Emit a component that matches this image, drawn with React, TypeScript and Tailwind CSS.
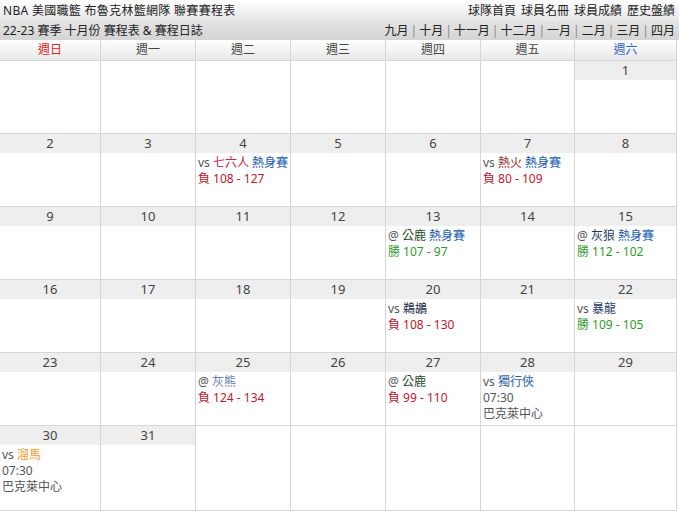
import React from "react";

type Line = { parts: { t: string; c: string }[] };
type Day = { d?: number; lines?: Line[] };

const GRAY = "text-[#555]";
const FONT = { fontFamily: '"Segoe UI", "Noto Sans", "Noto Sans CJK TC", sans-serif' };

const vs = (t: string) => ({ t, c: GRAY });
const warm = { t: " 熱身賽", c: "text-[#1a5cb0]" };
const lose = (s: string) => ({ parts: [{ t: "負 " + s, c: "text-[#c0182c]" }] });
const win = (s: string) => ({ parts: [{ t: "勝 " + s, c: "text-[#2e9a2e]" }] });
const plain = (t: string) => ({ parts: [{ t, c: GRAY }] });

const WEEKS: Day[][] = [
  [{}, {}, {}, {}, {}, {}, { d: 1 }],
  [
    { d: 2 }, { d: 3 },
    { d: 4, lines: [{ parts: [vs("vs "), { t: "七六人", c: "text-[#c4284e]" }, warm] }, lose("108 - 127")] },
    { d: 5 }, { d: 6 },
    { d: 7, lines: [{ parts: [vs("vs "), { t: "熱火", c: "text-[#a5332c]" }, warm] }, lose("80 - 109")] },
    { d: 8 },
  ],
  [
    { d: 9 }, { d: 10 }, { d: 11 }, { d: 12 },
    { d: 13, lines: [{ parts: [vs("@ "), { t: "公鹿", c: "text-[#1f4a2a]" }, warm] }, win("107 - 97")] },
    { d: 14 },
    { d: 15, lines: [{ parts: [vs("@ "), { t: "灰狼", c: "text-[#233a5a]" }, warm] }, win("112 - 102")] },
  ],
  [
    { d: 16 }, { d: 17 }, { d: 18 }, { d: 19 },
    { d: 20, lines: [{ parts: [vs("vs "), { t: "鵜鶘", c: "text-[#1c2a44]" }] }, lose("108 - 130")] },
    { d: 21 },
    { d: 22, lines: [{ parts: [vs("vs "), { t: "暴龍", c: "text-[#283a66]" }] }, win("109 - 105")] },
  ],
  [
    { d: 23 }, { d: 24 },
    { d: 25, lines: [{ parts: [vs("@ "), { t: "灰熊", c: "text-[#6a80aa]" }] }, lose("124 - 134")] },
    { d: 26 },
    { d: 27, lines: [{ parts: [vs("@ "), { t: "公鹿", c: "text-[#1f4a2a]" }] }, lose("99 - 110")] },
    { d: 28, lines: [{ parts: [vs("vs "), { t: "獨行俠", c: "text-[#2f63a8]" }] }, plain("07:30"), plain("巴克萊中心")] },
    { d: 29 },
  ],
  [
    { d: 30, lines: [{ parts: [vs("vs "), { t: "溜馬", c: "text-[#f0a030]" }] }, plain("07:30"), plain("巴克萊中心")] },
    { d: 31 }, {}, {}, {}, {}, {},
  ],
];

const HEAD = ["週日", "週一", "週二", "週三", "週四", "週五", "週六"];
const MONTHS = ["九月", "十月", "十一月", "十二月", "一月", "二月", "三月", "四月"];

function Cell({ day, h }: { day: Day; h: string }) {
  return (
    <div className={`border-r border-b border-[#d6d6d6] bg-white ${h}`}>
      {day.d !== undefined && (
        <>
          <div className="h-[19px] bg-[#eeeeee] text-center text-[13px] leading-[19px] text-[#444]">{day.d}</div>
          <div className="px-[2px] pt-[2px] text-[12px] leading-[16px]">
            {day.lines?.map((l, i) => (
              <div key={i} className="whitespace-nowrap">
                {l.parts.map((p, j) => (
                  <span key={j} className={p.c}>{p.t}</span>
                ))}
              </div>
            ))}
          </div>
        </>
      )}
    </div>
  );
}

export default function App() {
  return (
    <div className="w-[679px] h-[513px] bg-white text-[12px] text-[#222]" style={FONT}>
      {/* top bar */}
      <div className="flex h-[21px] items-center justify-between bg-gradient-to-b from-white to-[#e6e6e6] pl-[3px] pr-[4px] leading-[21px]">
        <span className="tracking-[0.3px]">NBA 美國職籃 布魯克林籃網隊 聯賽賽程表</span>
        <span className="flex gap-[5px]">
          <span>球隊首頁</span><span>球員名冊</span><span>球員成績</span><span>歷史盤績</span>
        </span>
      </div>
      {/* sub bar */}
      <div className="flex h-[19px] items-center justify-between bg-gradient-to-b from-[#e4e4e4] to-[#d4d4d4] pl-[3px] pr-[4px] leading-[19px]">
        <span>22-23 賽季 十月份 賽程表 &amp; 賽程日誌</span>
        <span className="flex">
          {MONTHS.map((m, i) => (
            <span key={m} className="flex">
              {i > 0 && <span className="px-[2px] text-[#888]">|</span>}
              {m}
            </span>
          ))}
        </span>
      </div>
      {/* calendar */}
      <div className="grid w-[677px] grid-cols-[101px_95px_95px_95px_95px_94px_102px]">
        {HEAD.map((h, i) => (
          <div
            key={h}
            className={`h-[21px] border-r border-b border-[#d6d6d6] bg-gradient-to-b from-white to-[#e8e8e8] text-center leading-[20px] ${
              i === 0 ? "text-[#d22]" : i === 6 ? "text-[#3366cc]" : "text-[#444]"
            }`}
          >
            {h}
          </div>
        ))}
        {WEEKS.map((w, wi) =>
          w.map((day, di) => <Cell key={`${wi}-${di}`} day={day} h={wi === 5 ? "h-[85px]" : "h-[73px]"} />)
        )}
      </div>
    </div>
  );
}
